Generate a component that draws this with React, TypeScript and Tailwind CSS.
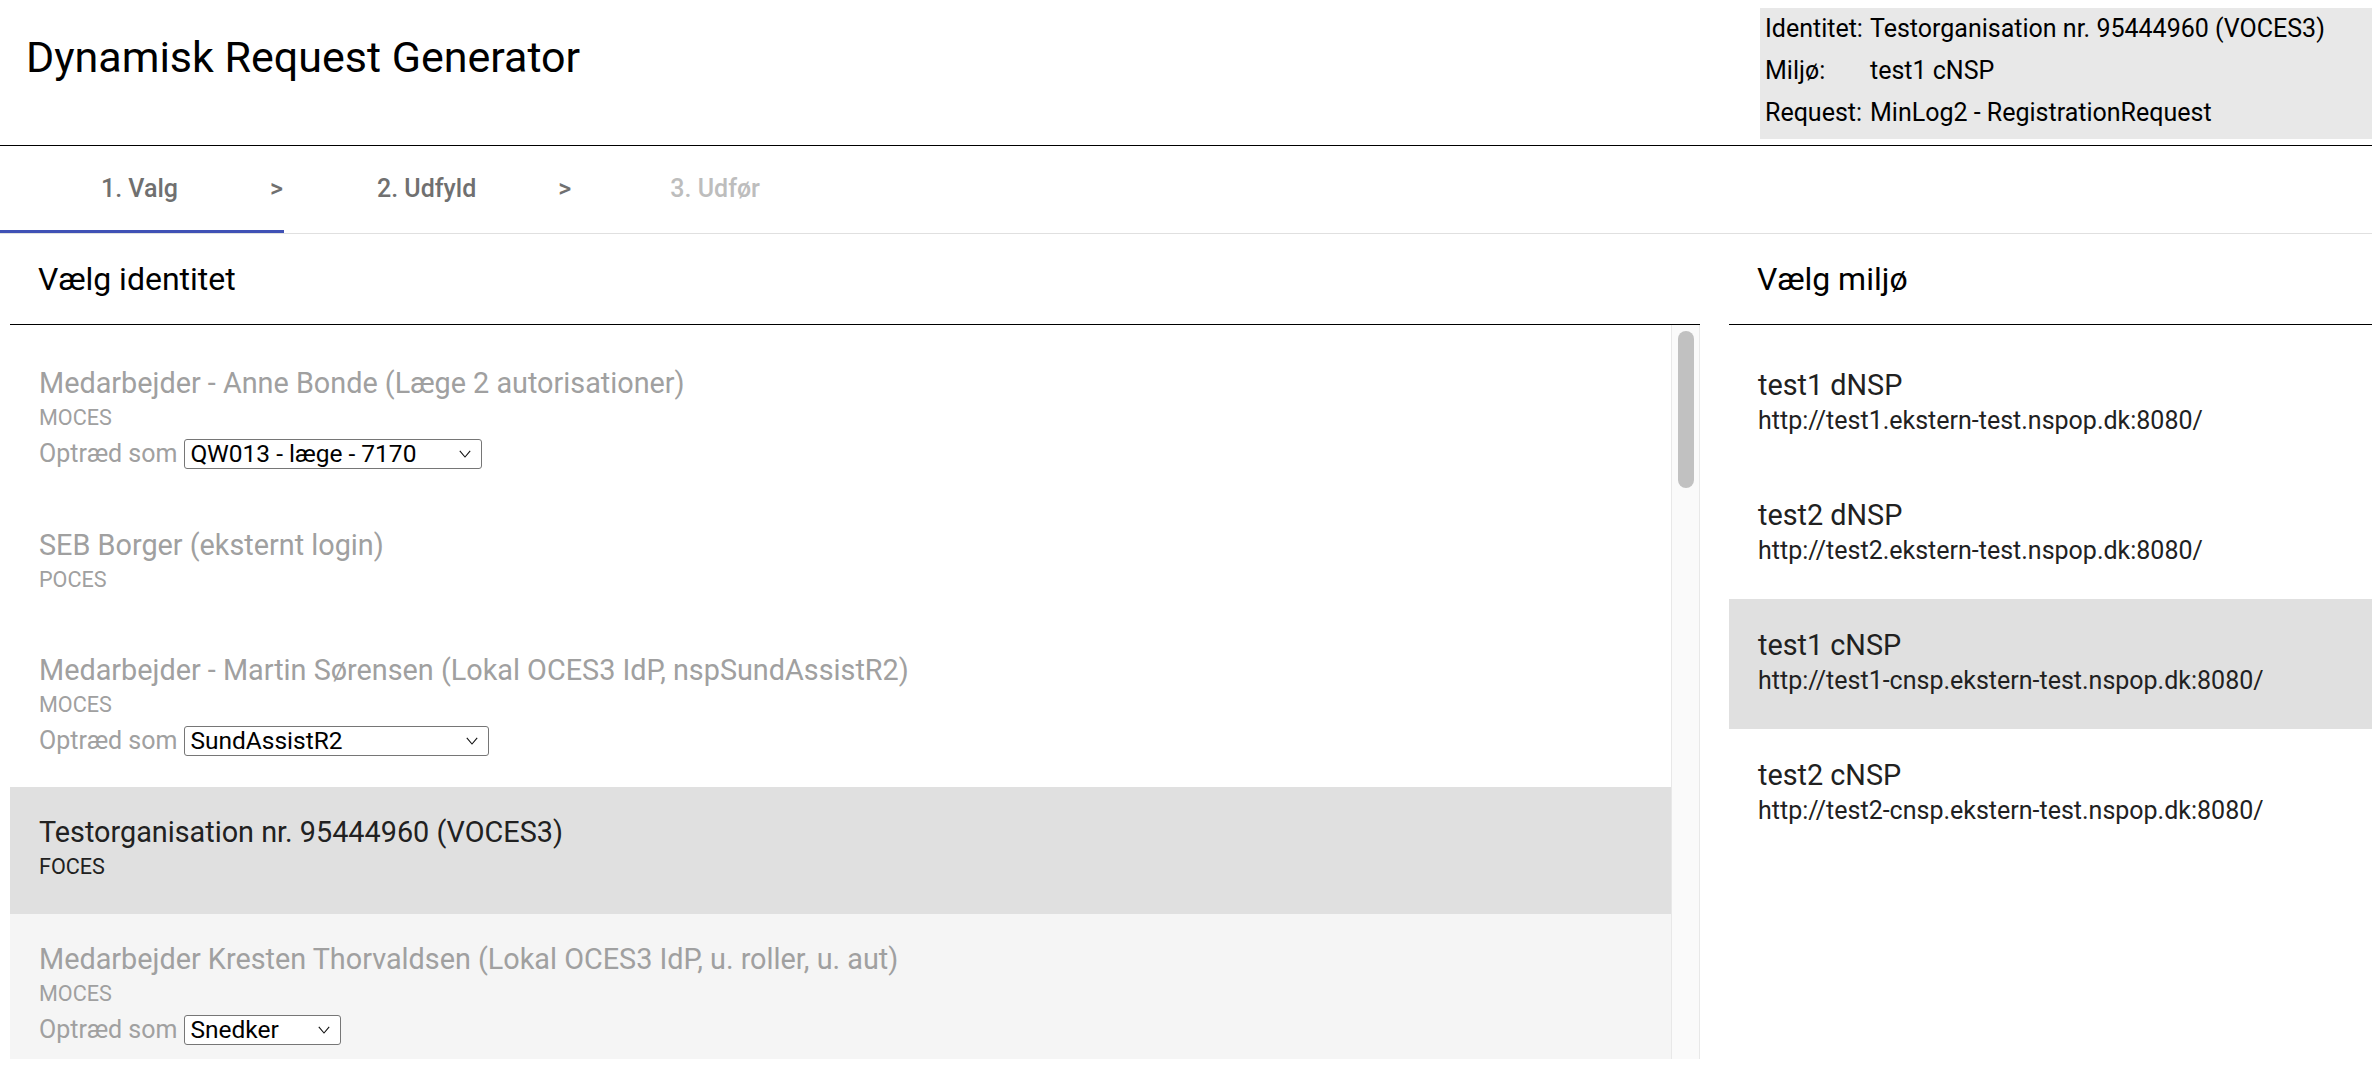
import React from "react";

type Identity = {
  name: string;
  cert: string;
  role?: string;
  selectW?: string;
  state: "disabled" | "selected" | "hover";
};

const identities: Identity[] = [
  { name: "Medarbejder - Anne Bonde (Læge 2 autorisationer)", cert: "MOCES", role: "QW013 - læge - 7170", selectW: "w-[298px]", state: "disabled" },
  { name: "SEB Borger (eksternt login)", cert: "POCES", state: "disabled" },
  { name: "Medarbejder - Martin Sørensen (Lokal OCES3 IdP, nspSundAssistR2)", cert: "MOCES", role: "SundAssistR2", selectW: "w-[305px]", state: "disabled" },
  { name: "Testorganisation nr. 95444960 (VOCES3)", cert: "FOCES", state: "selected" },
  { name: "Medarbejder Kresten Thorvaldsen (Lokal OCES3 IdP, u. roller, u. aut)", cert: "MOCES", role: "Snedker", selectW: "w-[157px]", state: "hover" },
];

const envs = [
  { name: "test1 dNSP", url: "http://test1.ekstern-test.nspop.dk:8080/", selected: false },
  { name: "test2 dNSP", url: "http://test2.ekstern-test.nspop.dk:8080/", selected: false },
  { name: "test1 cNSP", url: "http://test1-cnsp.ekstern-test.nspop.dk:8080/", selected: true },
  { name: "test2 cNSP", url: "http://test2-cnsp.ekstern-test.nspop.dk:8080/", selected: false },
];

function Chevron() {
  return (
    <svg width="12" height="8" viewBox="0 0 12 8" fill="none">
      <path d="M0.8 0.8 L6 7 L11.2 0.8" stroke="#111" strokeWidth="1.1" />
    </svg>
  );
}

function FakeSelect({ value, w }: { value: string; w: string }) {
  return (
    <div className={`${w} flex h-[30px] items-center justify-between rounded-[3px] border border-[#767676] bg-white pl-[5px] pr-[10px] text-[24.5px] leading-none text-black`}>
      <span>{value}</span>
      <Chevron />
    </div>
  );
}

function IdentityItem({ it }: { it: Identity }) {
  const bg = it.state === "selected" ? "bg-[#e0e0e0]" : it.state === "hover" ? "bg-[#f5f5f5]" : "bg-transparent";
  const color = it.state === "selected" ? "text-[#212121]" : "text-[#a0a0a0]";
  const pb = it.role ? "pb-[24px]" : it.state === "selected" ? "pb-[33px]" : "pb-[31px]";
  return (
    <div className={`${bg} ${color} ${pb} pl-[29px] pt-[24px]`}>
      <div className="h-[42px] text-[28.8px] leading-[42px]">{it.name}</div>
      <div className="h-[28px] text-[21.6px] leading-[28px]">{it.cert}</div>
      {it.role && it.selectW && (
        <div className="flex h-[44px] items-center gap-[7px] text-[25px]">
          <span>Optræd som</span>
          <FakeSelect value={it.role} w={it.selectW} />
        </div>
      )}
    </div>
  );
}

export default function App() {
  return (
    <div className="flex h-[1070px] w-[2372px] flex-col overflow-hidden bg-white font-['Roboto',sans-serif] text-[#212121]">
      {/* Header */}
      <header className="flex h-[146px] border-b border-black">
        <div className="flex h-[114px] flex-1 items-center pl-[26px] text-[43px] text-black">
          Dynamisk Request Generator
        </div>
        <div className="mt-[8px] h-[131px] w-[612px] bg-[#e8e8e8] pl-[5px] text-[25px] text-black">
          <div className="flex h-[42px] items-center">
            <span className="w-[105px]">Identitet:</span>
            <span>Testorganisation nr. 95444960 (VOCES3)</span>
          </div>
          <div className="flex h-[42px] items-center">
            <span className="w-[105px]">Miljø:</span>
            <span>test1 cNSP</span>
          </div>
          <div className="flex h-[42px] items-center">
            <span className="w-[105px]">Request:</span>
            <span>MinLog2 - RegistrationRequest</span>
          </div>
        </div>
      </header>

      {/* Tabs */}
      <nav className="flex h-[88px] flex-col border-b border-[#e0e0e0]">
        <div className="flex flex-1 items-center pl-[101px] pt-[2px] text-[25px] font-medium text-[#707070]">
          <span>1. Valg</span>
          <span className="ml-[92px]">&gt;</span>
          <span className="ml-[94px]">2. Udfyld</span>
          <span className="ml-[82px]">&gt;</span>
          <span className="ml-[99px] text-[#bdbdbd]">3. Udfør</span>
        </div>
        <div className="h-[3px] w-[284px] bg-[#3f51b5]" />
      </nav>

      {/* Main */}
      <main className="flex flex-1">
        <section className="ml-[10px] flex w-[1690px] flex-col">
          <div className="flex h-[91px] items-center border-b border-black pl-[28px] text-[32px] text-black">
            Vælg identitet
          </div>
          <div className="flex h-[734px]">
            <div className="flex-1 overflow-hidden pt-[13px]">
              {identities.map((it) => (
                <IdentityItem key={it.name} it={it} />
              ))}
            </div>
            <div className="w-[29px] border-x border-[#e8e8e8] bg-[#fafafa] pl-[6px] pt-[6px]">
              <div className="h-[157px] w-[16px] rounded-full bg-[#c1c1c1]" />
            </div>
          </div>
        </section>

        <section className="ml-[29px] flex flex-1 flex-col">
          <div className="flex h-[91px] items-center border-b border-black pl-[28px] text-[32px] text-black">
            Vælg miljø
          </div>
          <div className="pt-[14px]">
            {envs.map((e) => (
              <div key={e.name} className={`${e.selected ? "bg-[#e0e0e0]" : ""} h-[130px] pl-[29px] pt-[24px] text-[#212121]`}>
                <div className="h-[44px] text-[28.8px] leading-[44px]">{e.name}</div>
                <div className="h-[28px] text-[25px] leading-[28px]">{e.url}</div>
              </div>
            ))}
          </div>
        </section>
      </main>
    </div>
  );
}
